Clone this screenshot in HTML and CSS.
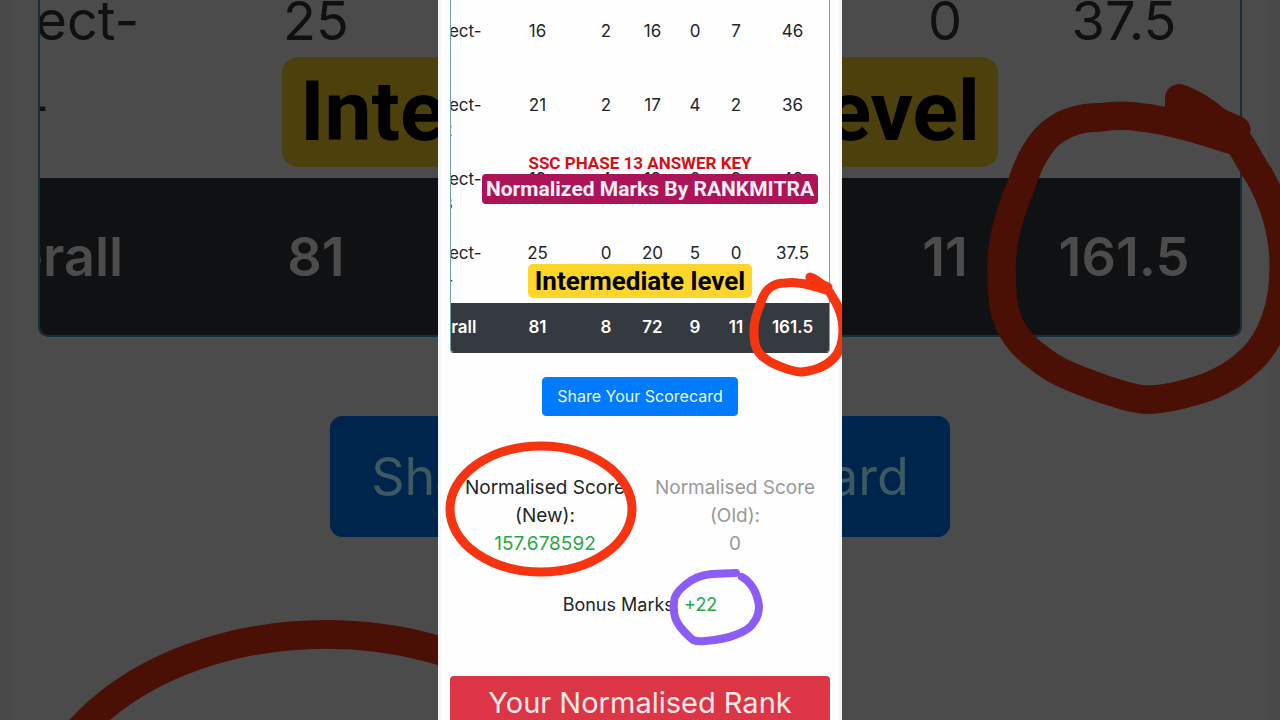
FILE: index.html
```html
<!DOCTYPE html>
<html lang="en">
<head>
    <meta charset="UTF-8">
    <meta name="viewport" content="width=device-width, initial-scale=1.0">
    <title>SSC Phase 13 Normalized Marks</title>
    <link rel="stylesheet" href="styles.css">
</head>
<body>
    <!-- dark enlarged copy behind the scorecard -->
    <div class="backdrop" aria-hidden="true">
        <div class="table-box">
            <table class="marks">
                <colgroup>
                    <col class="c-name"><col class="c-total"><col class="c-mid"><col class="c-last-two"><col class="c-marks">
                </colgroup>
                <tbody>
                    <tr><td>Subject-<br>4</td><td>25</td><td></td><td>0</td><td>37.5</td></tr>
                    <tr class="overall"><td>Overall</td><td>81</td><td></td><td>11</td><td>161.5</td></tr>
                </tbody>
            </table>
        </div>
        <div class="share">Share Your Scorecard</div>
        <div class="captions">
            <div class="level">Intermediate level</div>
        </div>
        <svg class="pen" viewBox="0 246 404 227" preserveAspectRatio="xMidYMin slice">
            <use href="#pen-total"/>
            <use href="#pen-score"/>
        </svg>
    </div>

    <main class="card">
        <div class="table-box">
            <table class="marks">
                <colgroup>
                    <col class="c-name"><col class="c-total"><col class="c-na"><col class="c-right"><col class="c-wrong"><col class="c-bonus"><col class="c-marks">
                </colgroup>
                <tbody>
                    <tr><td>Subject-<br>1</td><td>16</td><td>2</td><td>16</td><td>0</td><td>7</td><td>46</td></tr>
                    <tr><td>Subject-<br>2</td><td>21</td><td>2</td><td>17</td><td>4</td><td>2</td><td>36</td></tr>
                    <tr><td>Subject-<br>3</td><td>19</td><td>4</td><td>19</td><td>0</td><td>2</td><td>42</td></tr>
                    <tr><td>Subject-<br>4</td><td>25</td><td>0</td><td>20</td><td>5</td><td>0</td><td>37.5</td></tr>
                    <tr class="overall"><td>Overall</td><td>81</td><td>8</td><td>72</td><td>9</td><td>11</td><td>161.5</td></tr>
                </tbody>
            </table>
        </div>
        <button class="share" type="button">Share Your Scorecard</button>
        <div class="scores">
            <div>Normalised Score (New):<br><span class="green">157.678592</span></div>
            <div class="old">Normalised Score (Old):<br>0</div>
        </div>
        <div class="bonus">Bonus Marks: <span class="green">+22</span></div>
        <h1 class="rank">Your Normalised Rank</h1>

        <div class="captions">
            <div class="exam">SSC PHASE 13 ANSWER KEY</div>
            <div class="source">Normalized Marks By RANKMITRA</div>
            <div class="level">Intermediate level</div>
        </div>
        <!-- pen marks -->
        <svg class="pen" viewBox="0 0 404 720" preserveAspectRatio="xMidYMin slice" aria-hidden="true">
            <path id="pen-total" d="M372 277C378 279 384 284 388 288C392 291 394 297 397 301C401 308 405 318 405 330C405 343 401 353 395 359C391 363 386 366 381 368C375 370 368 372 362 372C357 372 353 370 349 369C341 366 334 364 328 359C322 355 319 350 318 347C316 342 316 336 316 330C316 321 319 312 322 305C324 298 328 290 333 287C337 284 342 283 347 283Q354 282 360 283Q370 284 388 290L372 279L390 287L376 283"/>
            <ellipse id="pen-score" cx="103" cy="509" rx="91" ry="63"/>
            <path class="pen-bonus" d="M298 573L274 574C262 575 254 579 247 585C242 589 236 595 236 602C235 610 236 616 239 622C243 629 249 635 255 640Q260 642 267 641C278 640 288 639 297 635C306 632 313 628 316 622C320 617 321 612 321 606C320 599 319 594 315 588Q310 580 304 577"/>
        </svg>
    </main>
</body>
</html>
```

FILE: styles.css
```css
*{
    box-sizing: border-box;
}
body{
    margin: 0;
    height: 100vh;
    overflow: hidden;
    position: relative;
    background: #4b4b4b;
    color: #212529;
    font-family: Inter, "Liberation Sans", sans-serif;
    font-size: 17px;
    line-height: 25px;
}
.card{
    position: relative;
    max-width: 404px;
    height: 100%;
    margin: 0 auto;
    padding: 0 12px;
    display: flex;
    flex-direction: column;
    align-items: center;
    background: #fefefe;
    box-shadow: inset 3px 0 #f5f6f9, inset -3px 0 #f5f6f9;
    overflow: hidden;
}

/* marks table, scrolled to its right end */
.table-box{
    align-self: stretch;
    flex: none;
    display: flex;
    justify-content: flex-end;
    overflow: hidden;
    padding-top: 7px;
    border: 1px solid #6fa3b3;
    border-top: 0;
    border-radius: 0 0 4px 4px;
}
.card .table-box{
    border-bottom-color: #343a40;
}
.marks{
    flex: none;
    width: 428px;
    table-layout: fixed;
    border-collapse: collapse;
    text-align: center;
}
.marks td{
    padding: 12px 0;
    vertical-align: top;
}
.overall{
    background: #343a40;
    color: #fff;
    font-weight: 600;
}
.c-name{ width: 93px; }
.c-total{ width: 87px; }
.c-na{ width: 50px; }
.c-right{ width: 43px; }
.c-wrong{ width: 42px; }
.c-bonus{ width: 40px; }
.c-marks{ width: 73px; }

.share{
    flex: none;
    margin-top: 24px;
    padding: 6px 14px;
    border: 1px solid #007bff;
    border-radius: 4px;
    background: #007bff;
    color: #e9f8ff;
    font: inherit;
    font-size: 16px;
    cursor: pointer;
}
.scores{
    align-self: stretch;
    display: grid;
    grid-template-columns: 1fr 1fr;
    margin-top: 58px;
    text-align: center;
    font-size: 19px;
    line-height: 28px;
}
.scores div{
    padding: 0 12px;
}
.old{
    color: #999;
}
.green{
    color: #28a745;
}
.bonus{
    margin-top: 33px;
    font-size: 18px;
    line-height: 28px;
}
.rank{
    align-self: stretch;
    flex: none;
    margin: 57px 0 0;
    padding: 8px;
    border-radius: 4px 4px 0 0;
    background: #dc3545;
    color: #fde8ea;
    text-align: center;
    font-size: 29px;
    font-weight: 400;
    line-height: 38px;
}

/* captions laid over the scorecard */
.captions{
    position: absolute;
    top: 153px;
    left: 0;
    right: 0;
    display: flex;
    flex-direction: column;
    align-items: center;
    font-family: Roboto, "Liberation Sans", sans-serif;
    font-weight: 700;
    white-space: nowrap;
}
.exam{
    margin-bottom: 1px;
    color: #d60f12;
    font-size: 17px;
    line-height: 20px;
}
.source{
    margin-left: 20px;
    padding: 0 4px;
    border-radius: 4px;
    background: #ab1457;
    color: #fdeef6;
    font-size: 21px;
    line-height: 30px;
}
.level{
    margin-top: 60px;
    padding: 0 7px;
    border-radius: 5px;
    background: #fdd52b;
    color: #000;
    font-size: 26px;
    line-height: 34px;
}
.pen{
    position: absolute;
    top: 0;
    left: 0;
    width: 100%;
    height: 100%;
    fill: none;
    stroke: #f73410;
    stroke-width: 9px;
    stroke-linecap: round;
    stroke-linejoin: round;
    pointer-events: none;
}
.pen-bonus{
    stroke: #8b5cf6;
    stroke-width: 8px;
}

/* enlarged dark copy */
.backdrop{
    position: absolute;
    top: 0;
    left: 0;
    right: 0;
    bottom: 0;
    padding: 0 38px;
    display: flex;
    flex-direction: column;
    align-items: center;
    overflow: hidden;
    box-shadow: inset 12px 0 #484848, inset -12px 0 #484848;
    color: #0f1011;
    font-size: 54px;
    line-height: 79px;
}
.backdrop .table-box{
    margin-top: -58px;
    padding-top: 0;
    border: 2px solid #10303f;
    border-top: 0;
    border-radius: 0 0 10px 10px;
}
.backdrop .marks{
    width: 1356px;
}
.backdrop .marks td{
    padding: 39px 0;
}
.backdrop .overall{
    background: #0f1113;
    color: #4c4c4c;
}
.backdrop .c-name{ width: 294px; }
.backdrop .c-total{ width: 276px; }
.backdrop .c-mid{ width: 428px; }
.backdrop .c-last-two{ width: 126px; }
.backdrop .c-marks{ width: 232px; }
.backdrop .share{
    margin-top: 79px;
    padding: 20px 40px;
    border-color: #00254d;
    border-radius: 12px;
    background: #00254d;
    color: #3c5a60;
    font-size: 52px;
}
.backdrop .captions{
    top: 57px;
}
.backdrop .level{
    margin-top: 0;
    padding: 0 18px;
    border-radius: 16px;
    background: #4c400d;
    font-size: 84px;
    line-height: 110px;
}
.backdrop .pen{
    stroke: #4a0f05;
}
```
